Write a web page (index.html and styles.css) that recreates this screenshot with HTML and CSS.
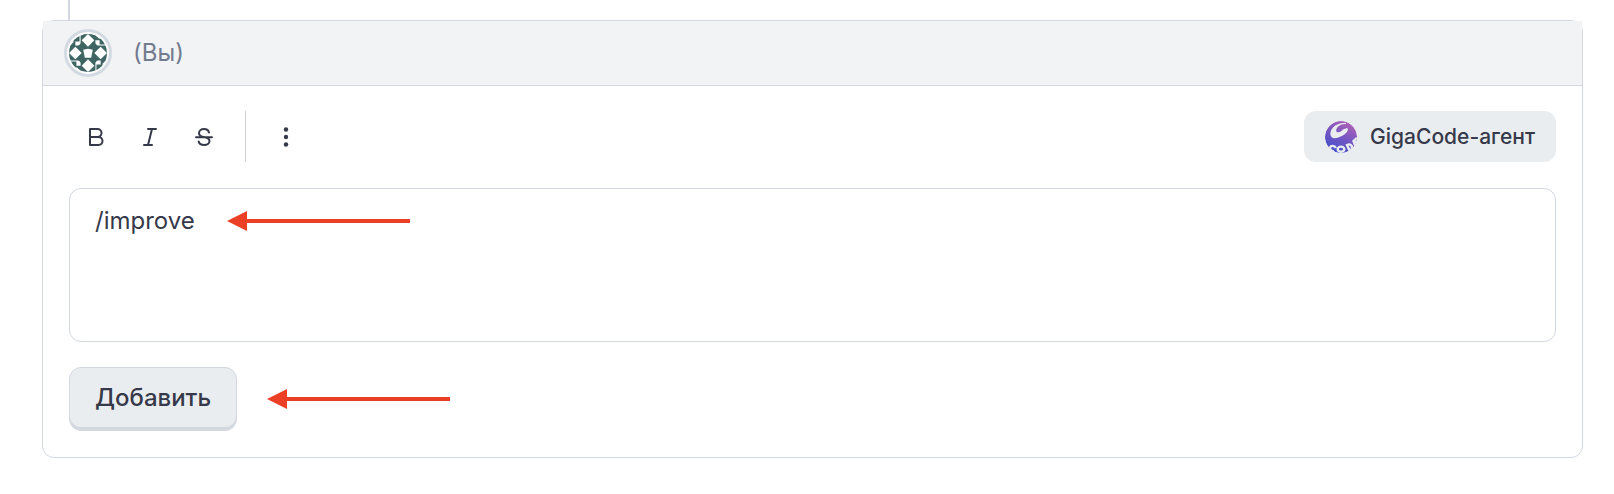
FILE: index.html
```html
<!DOCTYPE html>
<html lang="ru">
<head>
<meta charset="utf-8">
<meta name="viewport" content="width=device-width, initial-scale=1">
<title>Комментарий</title>
<link rel="stylesheet" href="styles.css">
</head>
<body>
<main class="thread">
  <div class="thread-line"></div>
  <form class="card">
    <header class="card-header">
      <span class="avatar">
        <svg viewBox="0 0 36 36" width="38" height="38" aria-hidden="true">
          <defs>
            <clipPath id="round"><circle cx="18" cy="18" r="18"/></clipPath>
            <g id="quarter">
              <path fill="#3f6663" d="M11 0H25V12H11Z"/>
              <path fill="#3f6663" d="M0 7L10 0V7ZM0 12L6 6V12ZM12 8V12H8Z"/>
            </g>
          </defs>
          <g clip-path="url(#round)">
            <path fill="#fff" d="M0 0H36V36H0Z"/>
            <use href="#quarter"/>
            <use href="#quarter" transform="rotate(90 18 18)"/>
            <use href="#quarter" transform="rotate(180 18 18)"/>
            <use href="#quarter" transform="rotate(270 18 18)"/>
            <path fill="#3f6663" d="M11 11H25V25H11Z"/>
            <path fill="#fff" d="M18 0L24 6L18 12L12 6ZM36 18L30 24L24 18L30 12ZM18 36L12 30L18 24L24 30ZM0 18L6 12L12 18L6 24Z"/>
            <path fill="#fff" d="M13.500 15L18 14L22.500 15L21 22.500H15Z"/>
          </g>
        </svg>
      </span>
      <span class="author">(Вы)</span>
    </header>
    <div class="card-body">
      <div class="toolbar">
        <div class="tools">
          <button class="tool" type="button" aria-label="Полужирный">
            <svg viewBox="0 0 24 24" width="24" height="24"><path d="M6 4H13.500A3.900 3.900 0 0 1 13.500 12H6ZM6 12H14.500A3.900 3.900 0 0 1 14.500 20H6Z"/></svg>
          </button>
          <button class="tool" type="button" aria-label="Курсив">
            <svg viewBox="0 0 24 24" width="24" height="24"><path d="M10 4H18M6 20H14M14 4L10 20"/></svg>
          </button>
          <button class="tool" type="button" aria-label="Зачёркнутый">
            <svg viewBox="0 0 24 24" width="24" height="24"><path d="M17 7.500C16.500 5.300 14.500 4 12 4C9 4 7 5.800 7 8.200C7 10.500 9 11.500 12 12C15 12.500 17.500 13.500 17.500 16C17.500 18.500 15 20 12.300 20C9.500 20 7.200 18.800 6.700 16.500M4 12.200H20"/></svg>
          </button>
          <span class="divider"></span>
          <button class="tool" type="button" aria-label="Ещё">
            <svg class="dots" viewBox="0 0 24 24" width="24" height="24"><circle cx="12" cy="4.500" r="2.200"/><circle cx="12" cy="12" r="2.200"/><circle cx="12" cy="19.500" r="2.200"/></svg>
          </button>
        </div>
        <button class="agent" type="button">
          <svg viewBox="0 0 32 32" width="32" height="32" aria-hidden="true">
            <defs>
              <linearGradient id="globe" x1="0.750" y1="0.100" x2="0.300" y2="1">
                <stop offset="0" stop-color="#a85fb8"/>
                <stop offset="0.500" stop-color="#7055c4"/>
                <stop offset="1" stop-color="#4450cc"/>
              </linearGradient>
              <clipPath id="ball"><circle cx="16" cy="16" r="16"/></clipPath>
            </defs>
            <g clip-path="url(#ball)">
              <circle cx="16" cy="16" r="16" fill="url(#globe)"/>
              <path fill="#eaedf0" d="M21 2C16 1.500 11 3 8 6.500C4.500 10.500 4.500 15.500 8 17C12 18 19 14.500 21.500 11.500C23 9.500 23.500 7.500 22 7L18 8.500C16.500 10.500 14 11.800 12 11C10 9.500 12 6 15 4.200C17 3.200 19 3 21 3Z"/>
              <g fill="none" stroke="#eaedf0" stroke-width="2.400">
                <path d="M11 27C9.500 24.500 6 24 5 26.500C4.500 28.500 7 30.500 9 30"/>
                <ellipse cx="16" cy="28.200" rx="3.300" ry="2.600"/>
                <path d="M22 24L24.500 29.500C29 28 27 21.500 22 24Z"/>
                <path d="M32 17L28.500 20L30.500 25.500M29.500 22.500L32 20.500"/>
              </g>
            </g>
          </svg>
          <span>GigaCode-агент</span>
        </button>
      </div>
      <div class="editor">
        <textarea class="input" aria-label="Комментарий" spellcheck="false">/improve</textarea>
        <svg class="arrow editor-arrow" viewBox="0 0 183 20" width="183" height="20" aria-hidden="true"><path d="M0 10L20 0V8H183V12H20V20Z"/></svg>
      </div>
      <div class="actions">
        <button class="submit" type="button">Добавить</button>
        <svg class="arrow" viewBox="0 0 183 20" width="183" height="20" aria-hidden="true"><path d="M0 10L20 0V8H183V12H20V20Z"/></svg>
      </div>
    </div>
  </form>
</main>
</body>
</html>
```
FILE: styles.css
```css
* { box-sizing: border-box; }

body {
  margin: 0;
  background: #fff;
  color: #363949;
  font-family: Inter, "Liberation Sans", sans-serif;
  font-size: 24px;
  line-height: 32px;
}

button, textarea { font: inherit; color: inherit; }

.thread { padding: 0 31px 36px 42px; }

.thread-line {
  width: 2px;
  height: 20px;
  margin-left: 26px;
  background: #d3d8e0;
}

.card {
  border: 1px solid #d3d8e0;
  border-radius: 12px;
}

.card-header {
  display: flex;
  align-items: center;
  gap: 21px;
  height: 65px;
  padding: 0 21px;
  background: #f1f3f5;
  border-bottom: 1px solid #d3d8e0;
}

.avatar {
  display: grid;
  place-items: center;
  width: 48px;
  height: 48px;
  border: 3px solid #d3dae1;
  border-radius: 50%;
  background: #fff;
}

.author { color: #737b8f; }

.card-body {
  display: flex;
  flex-direction: column;
  padding: 25px 26px 26px;
}

.toolbar {
  display: flex;
  align-items: center;
  justify-content: space-between;
  margin-bottom: 26px;
}

.tools { display: flex; align-items: center; }

.tool {
  display: grid;
  place-items: center;
  width: 54px;
  height: 51px;
  padding: 0;
  border: 0;
  background: none;
}

.tool svg {
  fill: none;
  stroke: #363949;
  stroke-width: 2;
  stroke-linecap: round;
  stroke-linejoin: round;
}

.tool .dots { fill: #363949; stroke: none; }

.divider {
  width: 1px;
  height: 51px;
  margin: 0 13px 0 14px;
  background: #d0d3da;
}

.agent {
  display: flex;
  align-items: center;
  gap: 13px;
  height: 51px;
  padding: 0 21px;
  border: 0;
  border-radius: 12px;
  background: #eaedf0;
  font-size: 21px;
  font-weight: 500;
}

.editor {
  display: flex;
  position: relative;
  margin-bottom: 25px;
}

.input {
  flex: 1;
  height: 154px;
  padding: 16px 25px;
  border: 1px solid #d3d8e0;
  border-radius: 12px;
  background: #fff;
  outline: 0;
  resize: none;
}

.arrow { display: block; fill: #ec4026; }

.editor-arrow { position: absolute; left: 158px; top: 23px; }

.actions { display: flex; align-items: center; gap: 30px; }

.submit {
  height: 64px;
  padding: 0 25px 2px;
  border: 1px solid #d3d8e0;
  border-radius: 12px;
  background: #eaedf0;
  box-shadow: inset 0 -3px #d3d8e0;
  font-weight: 500;
}
```
